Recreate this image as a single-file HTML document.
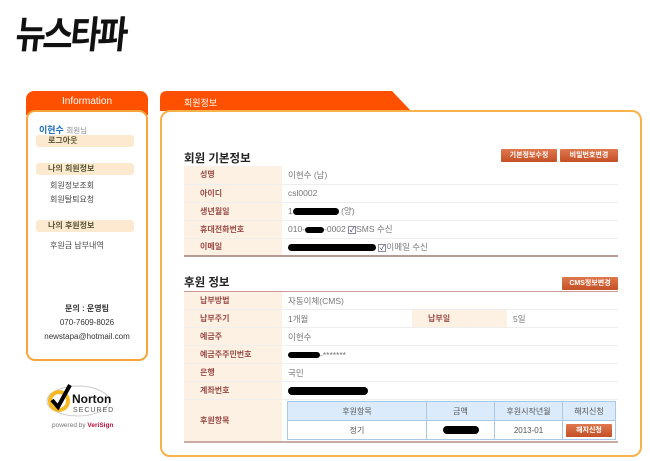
<!DOCTYPE html>
<html><head><meta charset="utf-8"><style>
*{margin:0;padding:0;box-sizing:border-box}
body{width:650px;height:461px;background:#fff;position:relative;overflow:hidden;font-family:"Liberation Sans","Noto Sans CJK KR",sans-serif;font-size:9px;color:#666}
.a{position:absolute}
.logo{left:16px;top:16px;font-family:"Noto Sans CJK KR",sans-serif;font-weight:bold;font-size:33px;letter-spacing:-3px;color:#111;transform:skewX(-6deg) scaleY(1.15);line-height:1}
.lh{left:26px;top:91px;width:122px;height:24px;background:#ff5000;border-radius:8px 8px 0 0;color:#fff;text-align:center;font-size:10px;line-height:21px}
.lb{left:26px;top:110px;width:122px;height:251px;border:2px solid #f9a43a;border-radius:9px;background:#fff}
.pill{left:36px;width:98px;height:12px;background:#fde9cf;border-radius:3px;color:#553;font-size:8px;line-height:12px;padding-left:12px;font-weight:bold}
.it{left:50px;font-size:8px;color:#444}
.tab{left:160px;top:91px}
.rb{left:160px;top:110px;width:482px;height:347px;border:2px solid #f9b14a;border-radius:10px;background:#fff}
.ttl{font-size:11.5px;color:#222;font-weight:bold}
.btn{height:13px;background:linear-gradient(#e0784f,#c44f26);color:#fff;font-size:7px;line-height:13px;text-align:center;border-radius:1px;font-weight:bold}
table.t{position:absolute;left:184px;width:434px;border-collapse:collapse}
.t td{height:18px;border-bottom:1px solid #eee;font-size:8.5px;color:#777}
.t td.l{background:#fdf1e4;width:98px;padding-left:16px;color:#9a4a44;font-weight:bold;font-size:8px}
.t td.v{padding-left:6px}
.blk{display:inline-block;background:#000;border-radius:5px;vertical-align:middle}
.cb{display:inline-block;width:8px;height:8px;border:1px solid #889;font-size:7px;line-height:7px;color:#226;vertical-align:middle;text-align:center}
.in{border-collapse:collapse;width:329px}
.in td{border:1px solid #a9c8e8;height:19px;text-align:center;font-size:8px;color:#555;padding:0}
.in tr.h td{background:#dcebfb}
</style></head><body>
<div class="a logo">뉴스타파</div>

<div class="a lh">Information</div>
<div class="a lb"></div>
<div class="a" style="left:39px;top:123px;font-size:9px"><b style="color:#1e6fc0">이현수</b> <span style="font-size:7.5px;color:#888">회원님</span></div>
<div class="a pill" style="top:135px">로그아웃</div>
<div class="a pill" style="top:163px">나의 회원정보</div>
<div class="a it" style="top:180px">회원정보조회</div>
<div class="a it" style="top:194px">회원탈퇴요청</div>
<div class="a pill" style="top:220px">나의 후원정보</div>
<div class="a it" style="top:240px">후원금 납부내역</div>
<div class="a" style="left:28px;top:302px;width:118px;text-align:center;font-size:8px;color:#333;line-height:14px"><b>문의 : 운영팀</b><br>070-7609-8026<br>newstapa@hotmail.com</div>

<svg class="a" style="left:42px;top:376px" width="72" height="56">
<ellipse cx="36" cy="25" rx="31" ry="15" fill="#fff" stroke="#ccc"/>
<circle cx="17" cy="25" r="11" fill="#f5b921"/><circle cx="17" cy="25" r="7" fill="#fff"/>
<path d="M10 24 L16 31 L28 9" stroke="#000" stroke-width="4" fill="none"/>
<text x="30" y="27" font-size="12" font-weight="bold" font-family="Liberation Sans" fill="#111">Norton</text>
<text x="31" y="36" font-size="7" font-family="Liberation Sans" fill="#555" letter-spacing="1">SECURED</text>
<text x="10" y="51" font-size="6.5" font-family="Liberation Sans" fill="#777">powered by <tspan fill="#b3123e" font-weight="bold">VeriSign</tspan></text>
</svg>

<svg class="a tab" width="252" height="22"><path d="M0 20 V7 Q0 0 7 0 H232 L251 20 Z" fill="#ff5000"/></svg>
<div class="a" style="left:184px;top:96px;color:#fff;font-size:9px">회원정보</div>
<div class="a rb"></div>

<div class="a ttl" style="left:184px;top:150px">회원 기본정보</div>
<div class="a btn" style="left:501px;top:149px;width:56px">기본정보수정</div>
<div class="a btn" style="left:560px;top:149px;width:58px">비밀번호변경</div>
<table class="t" style="top:166px;border-bottom:2px solid #b89a94">
<tr><td class="l">성명</td><td class="v">이현수 (남)</td></tr>
<tr><td class="l">아이디</td><td class="v">csl0002</td></tr>
<tr><td class="l">생년월일</td><td class="v">1<span class="blk" style="width:46px;height:7px"></span> (양)</td></tr>
<tr><td class="l">휴대전화번호</td><td class="v">010-<span class="blk" style="width:19px;height:6px"></span>-0002 <span class="cb">✓</span>SMS 수신</td></tr>
<tr><td class="l">이메일</td><td class="v"><span class="blk" style="width:88px;height:7px"></span> <span class="cb">✓</span>이메일 수신</td></tr>
</table>

<div class="a ttl" style="left:184px;top:274px">후원 정보</div>
<div class="a btn" style="left:562px;top:277px;width:56px">CMS정보변경</div>
<table class="t" style="top:291px;border-top:1px solid #c99;border-bottom:2px solid #c9aaa4">
<tr><td class="l">납부방법</td><td class="v" colspan="3">자동이체(CMS)</td></tr>
<tr><td class="l">납부주기</td><td class="v" style="width:130px">1개월</td><td class="l" style="width:95px">납부일</td><td class="v">5일</td></tr>
<tr><td class="l">예금주</td><td class="v" colspan="3">이현수</td></tr>
<tr><td class="l">예금주주민번호</td><td class="v" colspan="3"><span class="blk" style="width:32px;height:6px"></span>-*******</td></tr>
<tr><td class="l">은행</td><td class="v" colspan="3">국민</td></tr>
<tr><td class="l">계좌번호</td><td class="v" colspan="3"><span class="blk" style="width:80px;height:8px"></span></td></tr>
<tr><td class="l" style="height:42px">후원항목</td><td colspan="3" style="padding:1px 0 1px 5px">
<table class="in"><tr class="h"><td style="width:139px">후원항목</td><td style="width:68px">금액</td><td style="width:68px">후원시작년월</td><td>해지신청</td></tr>
<tr><td>정기</td><td><span class="blk" style="width:36px;height:8px;border-radius:8px"></span></td><td>2013-01</td><td><div class="btn" style="width:46px;margin:0 auto">해지신청</div></td></tr></table>
</td></tr>
</table>
</body></html>
